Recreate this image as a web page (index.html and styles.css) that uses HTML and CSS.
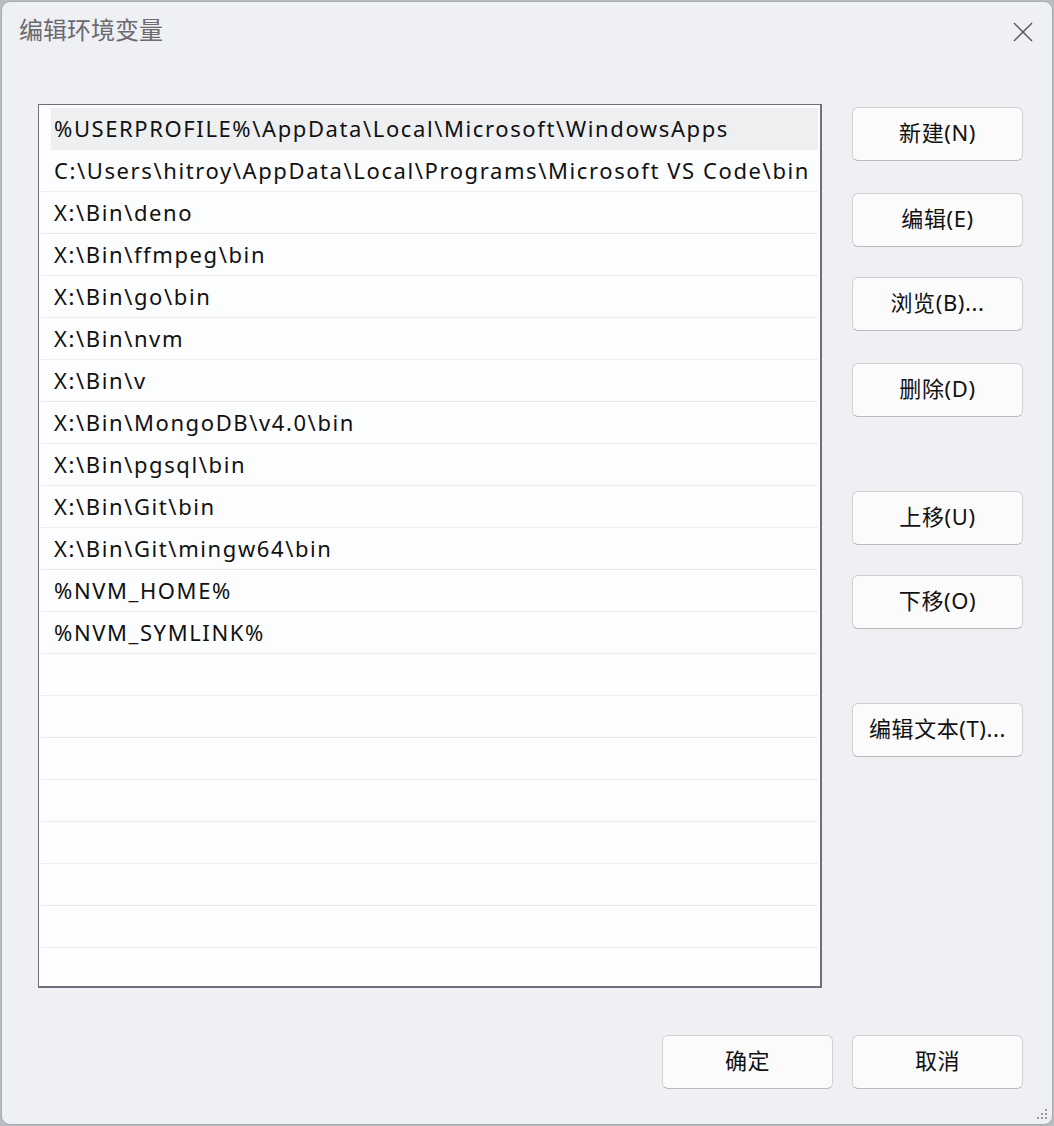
FILE: index.html
```html
<!DOCTYPE html>
<html lang="zh-CN">
<head>
  <meta charset="UTF-8" />
  <title>编辑环境变量</title>
  <link rel="stylesheet" href="styles.css">
</head>
<body>
  <div class="window">
    <!-- Title bar -->
    <div class="title-bar">
      <span class="title">编辑环境变量</span>
      <button class="close-btn" aria-label="关闭">
        <svg width="20" height="20" viewBox="0 0 20 20">
          <path d="M1 1 L19 19 M19 1 L1 19" stroke="#555" stroke-width="1.4" fill="none" />
        </svg>
      </button>
    </div>

    <!-- List + side buttons -->
    <div class="content">
      <div class="path-list">
        <div class="path-item selected">%USERPROFILE%\AppData\Local\Microsoft\WindowsApps</div>
        <div class="path-item">C:\Users\hitroy\AppData\Local\Programs\Microsoft VS Code\bin</div>
        <div class="path-item">X:\Bin\deno</div>
        <div class="path-item">X:\Bin\ffmpeg\bin</div>
        <div class="path-item">X:\Bin\go\bin</div>
        <div class="path-item">X:\Bin\nvm</div>
        <div class="path-item">X:\Bin\v</div>
        <div class="path-item">X:\Bin\MongoDB\v4.0\bin</div>
        <div class="path-item">X:\Bin\pgsql\bin</div>
        <div class="path-item">X:\Bin\Git\bin</div>
        <div class="path-item">X:\Bin\Git\mingw64\bin</div>
        <div class="path-item">%NVM_HOME%</div>
        <div class="path-item">%NVM_SYMLINK%</div>
        <div class="path-item"></div>
        <div class="path-item"></div>
        <div class="path-item"></div>
        <div class="path-item"></div>
        <div class="path-item"></div>
        <div class="path-item"></div>
        <div class="path-item"></div>
        <div class="path-item last"></div>
      </div>

      <div class="side-buttons">
        <button class="btn">新建(N)</button>
        <button class="btn gap-32">编辑(E)</button>
        <button class="btn gap-30">浏览(B)...</button>
        <button class="btn gap-32">删除(D)</button>
        <button class="btn gap-74">上移(U)</button>
        <button class="btn gap-30">下移(O)</button>
        <button class="btn gap-74">编辑文本(T)...</button>
      </div>
    </div>

    <!-- Footer -->
    <div class="footer">
      <button class="btn">确定</button>
      <button class="btn">取消</button>
      <span class="grip">
        <svg width="12" height="12" viewBox="0 0 12 12" fill="#9a9a9a">
          <rect x="9" y="1" width="2" height="2" />
          <rect x="5" y="5" width="2" height="2" />
          <rect x="9" y="5" width="2" height="2" />
          <rect x="1" y="9" width="2" height="2" />
          <rect x="5" y="9" width="2" height="2" />
          <rect x="9" y="9" width="2" height="2" />
        </svg>
      </span>
    </div>
  </div>
</body>
</html>
```

FILE: styles.css
```css
/*
  --------------------------------------------
  BASIC RESETS AND LAYOUT
  --------------------------------------------
*/
* {
  margin: 0;
  padding: 0;
  box-sizing: border-box;
}

body {
  font-family: "Noto Sans", "Noto Sans CJK SC", sans-serif;
  background-color: #b9bcc2;
  color: #111;
  height: 100vh;
  overflow: hidden;
}

.window {
  margin: 1px;
  height: 1124px;
  background-color: #eff0f3;
  border: 1px solid #a9abb0;
  border-radius: 9px;
  display: flex;
  flex-direction: column;
  position: relative;
}

/*
  --------------------------------------------
  TITLE BAR
  --------------------------------------------
*/
.title-bar {
  height: 102px;
  display: flex;
  justify-content: space-between;
  align-items: flex-start;
  padding: 9px 19px 0 17px;
}

.title {
  font-family: "Noto Sans CJK SC", sans-serif;
  font-size: 24px;
  color: #6a6a70;
  line-height: 36px;
}

.close-btn {
  background: none;
  border: none;
  margin-top: 11px;
  width: 20px;
  height: 20px;
}

/*
  --------------------------------------------
  LIST AND SIDE BUTTONS
  --------------------------------------------
*/
.content {
  display: flex;
  padding-left: 36px;
  padding-right: 29px;
}

.path-list {
  width: 784px;
  height: 884px;
  background-color: #fcfdfe;
  border: 1px solid #6e6e7c;
  border-bottom-width: 2px;
  border-right-width: 2px;
  padding: 3px 2px 0 2px;
  overflow: hidden;
}

.path-item {
  height: 42px;
  line-height: 41px;
  padding-left: 13px;
  font-size: 22px;
  letter-spacing: 1.6px;
  color: #111;
  border-bottom: 1px solid #ececef;
  white-space: nowrap;
}

.path-item.selected {
  margin-left: 10px;
  padding-left: 3px;
  background-color: #eeeff1;
}

.path-item.last {
  border-bottom: none;
}

.side-buttons {
  margin-left: auto;
  display: flex;
  flex-direction: column;
  padding-top: 3px;
}

.btn {
  width: 171px;
  height: 54px;
  padding-bottom: 6px;
  background-color: #fbfbfc;
  border: 1px solid #cfd0d4;
  border-bottom-color: #b8b9bd;
  border-radius: 6px;
  font-family: "Noto Sans", "Noto Sans CJK SC", sans-serif;
  font-size: 22px;
  letter-spacing: 0.6px;
  color: #111;
}

.side-buttons .gap-32 {
  margin-top: 32px;
}

.side-buttons .gap-30 {
  margin-top: 30px;
}

.side-buttons .gap-74 {
  margin-top: 74px;
}

/*
  --------------------------------------------
  FOOTER
  --------------------------------------------
*/
.footer {
  display: flex;
  justify-content: flex-end;
  gap: 19px;
  padding-top: 47px;
  padding-right: 29px;
}

.grip {
  position: absolute;
  right: 4px;
  bottom: 4px;
  line-height: 0;
}
```
